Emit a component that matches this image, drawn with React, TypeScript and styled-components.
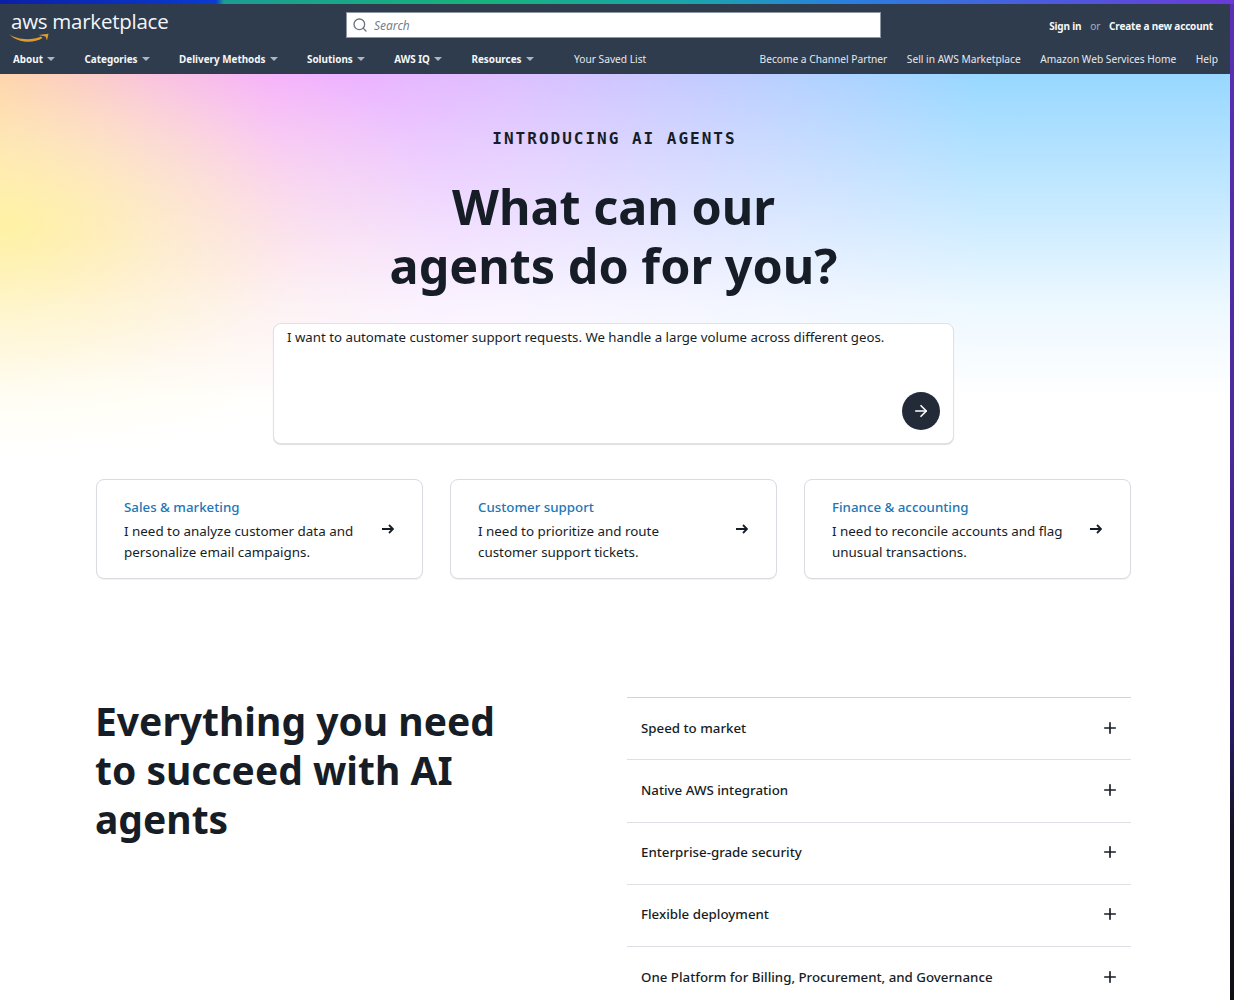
import styled, { createGlobalStyle } from "styled-components"
import { ArrowRight, Plus, Search } from "lucide-react"

const GlobalStyle = createGlobalStyle`
  html, body {
    margin: 0;
    padding: 0;
    background: #fff;
  }
  body {
    font-family: "Noto Sans", Arial, sans-serif;
    color: #161d26;
  }
  * {
    box-sizing: border-box;
  }
`

const Page = styled.div`
  width: 1234px;
  height: 1000px;
  overflow: hidden;
  display: flex;
  flex-direction: column;
`

const TopStripe = styled.div`
  height: 4px;
  flex: none;
  background: linear-gradient(
    90deg,
    #0a1fa8 0,
    #0b3bd0 216px,
    #1c9c92 224px,
    #17b27c 480px,
    #1ba3ae 700px,
    #2a7fe0 850px,
    #6a3ad8 1234px
  );
`

const Shell = styled.div`
  flex: 1;
  display: flex;
  min-height: 0;
`

const Main = styled.div`
  flex: 1;
  min-width: 0;
`

const Rail = styled.div`
  width: 4px;
  flex: none;
  background: linear-gradient(180deg, #5b30b4 0, #4a2a9c 45%, #2b1a68 72%, #12131f 84%, #0e0f16 100%);
`

const Header = styled.header`
  height: 70px;
  background: #2f3c4e;
  color: #fff;
  padding: 8px 12px 0 11px;
`

const TopRow = styled.div`
  display: flex;
  align-items: flex-start;
  height: 38px;
`

const Logo = styled.div`
  width: 335px;
  flex: none;
  position: relative;
  margin-top: -2px;
  font-family: "Open Sans", sans-serif;
  font-weight: 400;
  font-size: 20.5px;
  line-height: 22px;
  letter-spacing: -0.25px;
  color: #f4f6f8;
`

const Smile = styled.svg`
  position: absolute;
  left: -2px;
  top: 23px;
`

const SearchBox = styled.div`
  width: 535px;
  height: 26px;
  flex: none;
  display: flex;
  align-items: center;
  gap: 6px;
  padding-left: 5px;
  background: #fff;
  border: 1px solid #8d96a3;
  color: #6b7480;
`

const SearchHint = styled.span`
  font-size: 12px;
  font-style: italic;
  color: #77808b;
`

const Auth = styled.div`
  margin-left: auto;
  margin-right: 5px;
  display: flex;
  gap: 9px;
  align-items: center;
  height: 28px;
  font-size: 10px;
  font-weight: 700;
  letter-spacing: -0.18px;
  color: #f6f7f8;
`

const AuthOr = styled.span`
  font-weight: 400;
  color: #a9b1bb;
`

const NavRow = styled.nav`
  display: flex;
  align-items: center;
  height: 18px;
  padding-left: 2px;
  white-space: nowrap;
`

const NavMenu = styled.span`
  display: flex;
  align-items: center;
  gap: 4px;
  margin-right: 29.5px;
  font-size: 9.9px;
  font-weight: 700;
  color: #f6f7f8;
`

const Caret = styled.i`
  width: 0;
  height: 0;
  border-left: 4.5px solid transparent;
  border-right: 4.5px solid transparent;
  border-top: 4px solid #aeb5bf;
`

const NavLink = styled.span<{ $lead?: boolean }>`
  margin-left: ${p => (p.$lead ? "11px" : "0")};
  font-size: 10.2px;
  color: #e6e9ec;
`

const NavRight = styled.div`
  margin-left: auto;
  display: flex;
  gap: 19.5px;
`

const Hero = styled.section`
  height: 405px;
  display: flex;
  flex-direction: column;
  align-items: center;
  padding: 55px 3px 0 0;
  background:
    radial-gradient(ellipse 450px 235px at 0 150px, rgba(255, 243, 160, 0.92) 0, rgba(255, 245, 175, 0.5) 40%, rgba(255, 247, 190, 0.2) 70%, rgba(255, 248, 200, 0) 100%),
    linear-gradient(180deg, rgba(255, 255, 255, 0) 0, rgba(255, 255, 255, 0.45) 130px, rgba(255, 255, 255, 0.82) 230px, #fff 325px),
    linear-gradient(90deg, #fdc9a8 0, #f8b8e4 150px, #f5adff 270px, #dcc0ff 520px, #b8d0ff 780px, #98d8ff 980px, #98d8ff 100%);
`

const Eyebrow = styled.div`
  font-family: "DejaVu Sans Mono", monospace;
  font-weight: 700;
  font-size: 16px;
  line-height: 20px;
  letter-spacing: 2px;
  margin-right: -2px;
`

const HeroTitle = styled.h1`
  margin: 28px 0 0;
  font-size: 48.5px;
  line-height: 59px;
  font-weight: 700;
  text-align: center;
`

const PromptBox = styled.div`
  width: 681px;
  height: 121px;
  margin-top: 28px;
  padding: 3px 13px;
  background: #fff;
  border: 1px solid #dfe2e6;
  border-radius: 8px;
  box-shadow: 0 1px 1px rgba(0, 0, 40, 0.14);
  position: relative;
  font-size: 13.25px;
  line-height: 20px;
`

const SendButton = styled.button`
  position: absolute;
  right: 13px;
  bottom: 13px;
  width: 38px;
  height: 38px;
  padding: 0;
  display: flex;
  align-items: center;
  justify-content: center;
  border: 0;
  border-radius: 50%;
  background: #232b39;
  color: #fff;
`

const CardRow = styled.div`
  display: grid;
  grid-template-columns: repeat(3, 327px);
  gap: 27px;
  padding: 0 0 0 96px;
`

const Card = styled.div`
  height: 100px;
  display: flex;
  align-items: center;
  gap: 16px;
  padding: 0 28px 0 27px;
  border: 1px solid #d8dbe0;
  border-radius: 8px;
  background: #fff;
  box-shadow: 0 1px 1px rgba(0, 0, 40, 0.06);
`

const CardText = styled.div`
  flex: 1;
  padding-top: 1px;
  font-size: 13.4px;
  line-height: 20.5px;
`

const CardTitle = styled.div`
  color: #2176b5;
  font-size: 13.3px;
  font-weight: 500;
  margin-bottom: 4px;
`

const CardArrow = styled.svg`
  flex: none;
  width: 12px;
  height: 10px;
`

const Feature = styled.section`
  display: grid;
  grid-template-columns: 532px 504px;
  padding: 118px 0 0 95px;
`

const FeatureTitle = styled.h2`
  margin: -1px 0 0;
  width: 420px;
  font-size: 39px;
  line-height: 49px;
  font-weight: 700;
`

const Accordion = styled.div`
  border-top: 1px solid #d0d3d8;
`

const Row = styled.div`
  height: 62.25px;
  display: flex;
  align-items: center;
  justify-content: space-between;
  padding: 0 12px 2px 14px;
  border-bottom: 1px solid #dcdfe3;
  font-size: 13.3px;
  font-weight: 500;
`

const cards = [
  { title: "Sales & marketing", text: "I need to analyze customer data and personalize email campaigns." },
  { title: "Customer support", text: "I need to prioritize and route customer support tickets." },
  { title: "Finance & accounting", text: "I need to reconcile accounts and flag unusual transactions." },
]

const menus = ["About", "Categories", "Delivery Methods", "Solutions", "AWS IQ", "Resources"]
const links = ["Become a Channel Partner", "Sell in AWS Marketplace", "Amazon Web Services Home", "Help"]
const rows = [
  "Speed to market",
  "Native AWS integration",
  "Enterprise-grade security",
  "Flexible deployment",
  "One Platform for Billing, Procurement, and Governance",
]

export default function App() {
  return (
    <Page>
      <GlobalStyle />
      <TopStripe />
      <Shell>
        <Main>
          <Header>
            <TopRow>
              <Logo>
                aws marketplace
                <Smile width="42" height="10" viewBox="0 0 42 10" fill="#dc9c30">
                  <path d="M0 1C7 6.5 22 8 32 3.5L33.5 5C24 11 8 10 0 1Z" />
                  <path d="M29.5 2L39.5 0.8L38 7.5L36.5 3.5Z" />
                </Smile>
              </Logo>
              <SearchBox>
                <Search size={16} strokeWidth={2} />
                <SearchHint>Search</SearchHint>
              </SearchBox>
              <Auth>
                <span>Sign in</span>
                <AuthOr>or</AuthOr>
                <span>Create a new account</span>
              </Auth>
            </TopRow>
            <NavRow>
              {menus.map(m => (
                <NavMenu key={m}>
                  {m}
                  <Caret />
                </NavMenu>
              ))}
              <NavLink $lead>Your Saved List</NavLink>
              <NavRight>
                {links.map(l => (
                  <NavLink key={l}>{l}</NavLink>
                ))}
              </NavRight>
            </NavRow>
          </Header>
          <Hero>
            <Eyebrow>INTRODUCING AI AGENTS</Eyebrow>
            <HeroTitle>
              What can our
              <br />
              agents do for you?
            </HeroTitle>
            <PromptBox>
              I want to automate customer support requests. We handle a large volume across different geos.
              <SendButton aria-label="Send">
                <ArrowRight size={18} strokeWidth={2.2} />
              </SendButton>
            </PromptBox>
          </Hero>
          <CardRow>
            {cards.map(c => (
              <Card key={c.title}>
                <CardText>
                  <CardTitle>{c.title}</CardTitle>
                  {c.text}
                </CardText>
                <CardArrow viewBox="0 0 12 10" fill="none" stroke="currentColor" strokeWidth="1.8">
                  <path d="M0 5H11M7 1L11 5L7 9" />
                </CardArrow>
              </Card>
            ))}
          </CardRow>
          <Feature>
            <FeatureTitle>Everything you need to succeed with AI agents</FeatureTitle>
            <Accordion>
              {rows.map(r => (
                <Row key={r}>
                  {r}
                  <Plus size={18} strokeWidth={2.2} />
                </Row>
              ))}
            </Accordion>
          </Feature>
        </Main>
        <Rail />
      </Shell>
    </Page>
  )
}
